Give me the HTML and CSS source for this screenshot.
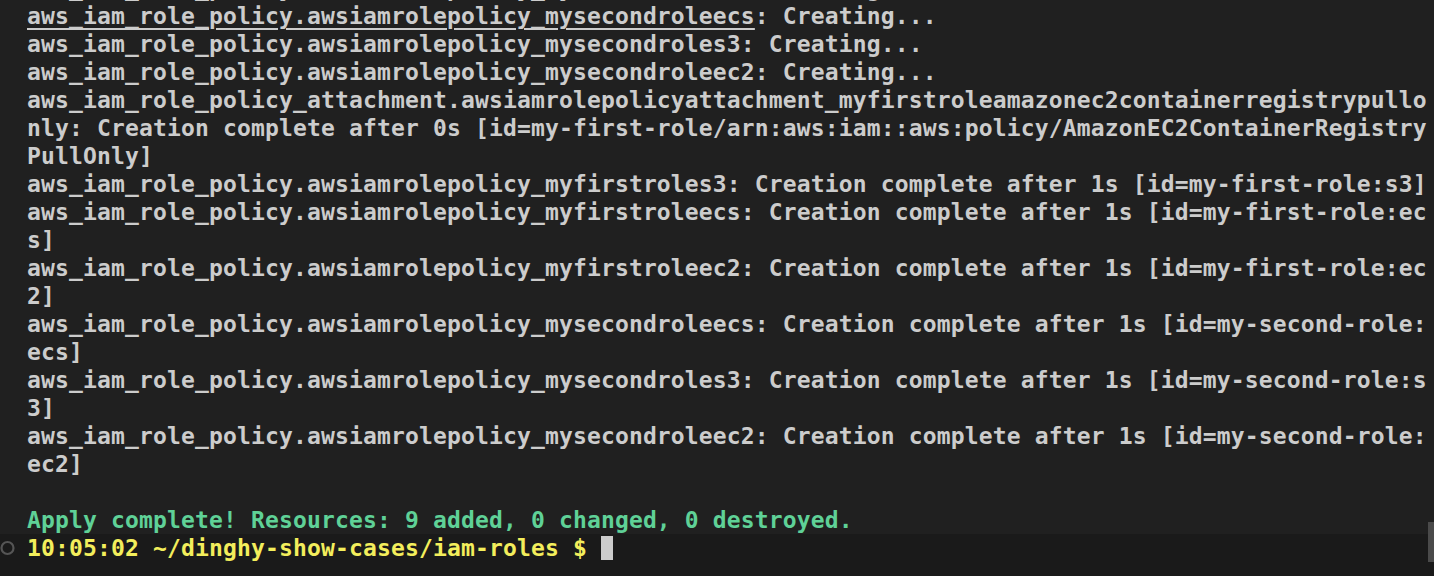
FILE: index.html
```html
<!DOCTYPE html>
<html>
<head>
    <title>Terminal - terraform apply</title>
    <link rel="stylesheet" href="styles.css">
</head>
<body>
    <div class="terminal">
        <div class="output">
            <div class="line">aws_iam_role_policy.awsiamrolepolicy_myfirstroleec2: Creating...</div>
            <div class="line"><span class="link">aws_iam_role_policy.awsiamrolepolicy_mysecondroleecs</span>: Creating...</div>
            <div class="line">aws_iam_role_policy.awsiamrolepolicy_mysecondroles3: Creating...</div>
            <div class="line">aws_iam_role_policy.awsiamrolepolicy_mysecondroleec2: Creating...</div>
            <div class="line">aws_iam_role_policy_attachment.awsiamrolepolicyattachment_myfirstroleamazonec2containerregistrypullo</div>
            <div class="line">nly: Creation complete after 0s [id=my-first-role/arn:aws:iam::aws:policy/AmazonEC2ContainerRegistry</div>
            <div class="line">PullOnly]</div>
            <div class="line">aws_iam_role_policy.awsiamrolepolicy_myfirstroles3: Creation complete after 1s [id=my-first-role:s3]</div>
            <div class="line">aws_iam_role_policy.awsiamrolepolicy_myfirstroleecs: Creation complete after 1s [id=my-first-role:ec</div>
            <div class="line">s]</div>
            <div class="line">aws_iam_role_policy.awsiamrolepolicy_myfirstroleec2: Creation complete after 1s [id=my-first-role:ec</div>
            <div class="line">2]</div>
            <div class="line">aws_iam_role_policy.awsiamrolepolicy_mysecondroleecs: Creation complete after 1s [id=my-second-role:</div>
            <div class="line">ecs]</div>
            <div class="line">aws_iam_role_policy.awsiamrolepolicy_mysecondroles3: Creation complete after 1s [id=my-second-role:s</div>
            <div class="line">3]</div>
            <div class="line">aws_iam_role_policy.awsiamrolepolicy_mysecondroleec2: Creation complete after 1s [id=my-second-role:</div>
            <div class="line">ec2]</div>
            <div class="line"> </div>
            <div class="line green">Apply complete! Resources: 9 added, 0 changed, 0 destroyed.</div>
        </div>
        <div class="prompt-row">
            <span class="gutter">
                <svg width="16" height="16" viewBox="0 0 16 16"><circle cx="7.5" cy="8" r="6" fill="none" stroke="#555555" stroke-width="2.2"/></svg>
            </span>
            <span class="prompt">10:05:02 ~/dinghy-show-cases/iam-roles $ </span><span class="cursor"></span>
        </div>
        <div class="scrollbar"></div>
    </div>
</body>
</html>
```

FILE: styles.css
```css
html, body { margin: 0; padding: 0; height: 100%; overflow: hidden; }
body { background: #202020; }
.terminal { position: relative; height: 576px; overflow: hidden; font-family: "DejaVu Sans Mono", "Liberation Mono", monospace; font-weight: bold; font-size: 23px; letter-spacing: 0.15px; color: #cccccc; }
.output { margin-top: -26px; padding-left: 27px; }
.line { height: 28px; line-height: 28px; white-space: pre; }
.link { text-decoration: underline; text-decoration-thickness: 2px; text-underline-offset: 4px; }
.green { color: #5fd197; }
.prompt-row { display: flex; align-items: flex-start; height: 28px; padding-bottom: 14px; background: #1a1a1a; white-space: pre; }
.gutter { width: 27px; height: 28px; display: flex; align-items: center; }
.prompt { color: #f3ee5c; line-height: 28px; }
.cursor { display: inline-block; width: 12px; height: 24px; margin-top: 2px; background: #cccccc; }
.scrollbar { position: absolute; right: 0; top: 522px; width: 6px; height: 40px; background: #4a4a4a; }
```
